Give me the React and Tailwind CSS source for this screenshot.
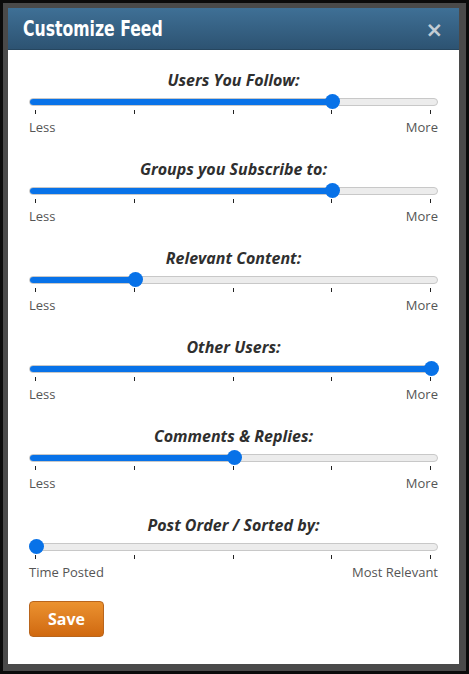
import React from 'react';

const SLIDERS = [
  { label: 'Users You Follow:', value: 0.75, left: 'Less', right: 'More' },
  { label: 'Groups you Subscribe to:', value: 0.75, left: 'Less', right: 'More' },
  { label: 'Relevant Content:', value: 0.25, left: 'Less', right: 'More' },
  { label: 'Other Users:', value: 1, left: 'Less', right: 'More' },
  { label: 'Comments & Replies:', value: 0.5, left: 'Less', right: 'More' },
  { label: 'Post Order / Sorted by:', value: 0, left: 'Time Posted', right: 'Most Relevant' },
];

function FeedSlider({ label, value, left, right }) {
  // thumb travels between 7px and (width - 7px)
  const thumbLeft = `calc(${value * 100}% - ${value * 14}px)`;
  const fill = `calc(${value * 100}% - ${value * 14}px + 7px)`;

  return (
    <div className="flex flex-col">
      <h3 className="text-center text-[16px] leading-[20px] font-bold italic text-[#2f2f2f]">{label}</h3>
      <div className="relative h-[16px] mt-[4px]">
        <div className="absolute left-0 right-0 top-[4px] h-[8px] rounded-full bg-[#ececec] border border-[#c8c8c8] overflow-hidden">
          <div className="h-full bg-[#0872e8]" style={{ width: fill }} />
        </div>
        <div
          className="absolute top-[0px] w-[15px] h-[15px] rounded-full bg-[#0872e8]"
          style={{ left: thumbLeft }}
        />
      </div>
      <div className="flex justify-between pl-[6px] pr-[7px] h-[5px]">
        {[0, 1, 2, 3, 4].map((i) => (
          <span key={i} className="w-px h-[4px] bg-[#222]" />
        ))}
      </div>
      <div className="flex justify-between text-[13px] leading-[18px] text-[#555] mt-[3px]">
        <span>{left}</span>
        <span>{right}</span>
      </div>
    </div>
  );
}

export default function App() {
  return (
    <div className="w-[469px] h-[674px] bg-[#0b0b0b] p-[3px]" style={{ fontFamily: '"Open Sans", "Liberation Sans", sans-serif' }}>
      <div className="h-[668px] bg-[#4a4a4a] pt-[5px] pl-[5px] pr-[7px] pb-[7px]">
        <div className="h-full flex flex-col bg-white">
          {/* Header */}
          <div className="h-[42px] flex items-center justify-between pl-[15px] pr-[16px] bg-gradient-to-b from-[#3f7096] to-[#2d5372] border-b border-[#26465f]">
            <h2
              className="text-white text-[21px] font-bold origin-left scale-x-[0.83] mt-[3px] whitespace-nowrap"
              style={{ fontFamily: '"DejaVu Sans Condensed", "Liberation Sans", sans-serif' }}
            >
              Customize Feed
            </h2>
            <span className="text-[#c3ccd4] text-[21px] font-bold leading-none mt-[3px]" style={{ fontFamily: '"DejaVu Sans", sans-serif' }}>×</span>
          </div>

          {/* Sliders */}
          <div className="flex flex-col gap-[23px] pt-[20px] pl-[21px] pr-[21px]">
            {SLIDERS.map((s, i) => (
              <FeedSlider key={i} {...s} />
            ))}
          </div>

          <div className="pl-[21px] pt-[20px]">
            <button className="w-[75px] h-[36px] rounded-[4px] border border-[#b9651c] bg-gradient-to-b from-[#eb922f] to-[#d0690f] text-white text-[16px] font-bold">
              Save
            </button>
          </div>
        </div>
      </div>
    </div>
  );
}
